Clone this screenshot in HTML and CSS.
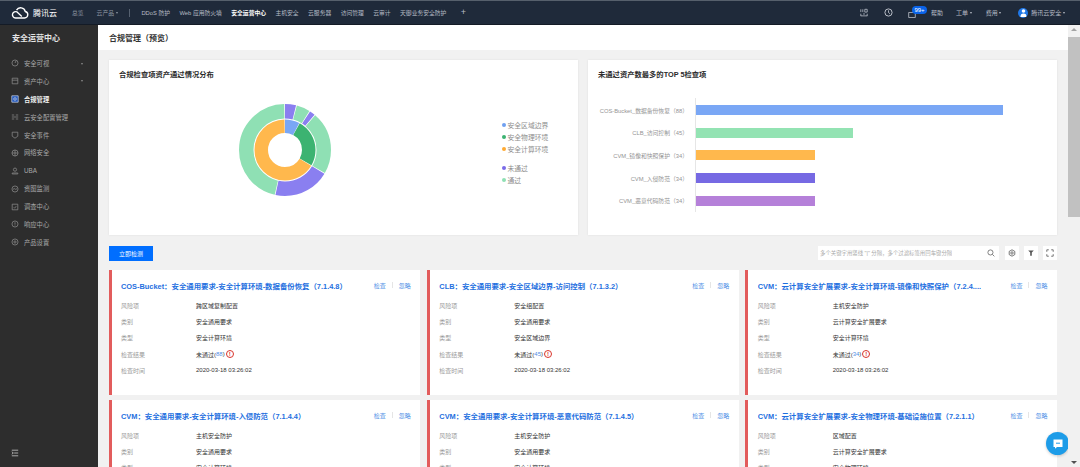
FILE: index.html
```html
<!DOCTYPE html>
<html lang="zh">
<head>
<meta charset="utf-8">
<title>合规管理（预览）</title>
<link rel="stylesheet" href="styles.css">
</head>
<body>
<header class="topbar">
  <div class="logo">
    <svg class="logo-mark" viewBox="0 0 22 14" width="20" height="13"><path d="M6 13h10a3.600 3.600 0 0 0 .8-7.100A5.200 5.200 0 0 0 7.200 4.400M6 13a3.500 3.500 0 1 1 1.800-6.600L13 11.400" fill="none" stroke="#fff" stroke-width="1.500"/></svg>
    <span class="logo-text">腾讯云</span>
  </div>
  <nav class="nav">
    <a class="nav-dim">总览</a>
    <a class="nav-dim nav-products">云产品 <i class="caret"></i></a>
    <span class="nav-sep"></span>
    <a>DDoS 防护</a><a>Web 应用防火墙</a><a class="nav-active">安全运营中心</a><a>主机安全</a><a>云服务器</a><a>访问管理</a><a>云审计</a><a>天御业务安全防护</a>
    <a class="nav-plus">+</a>
  </nav>
  <div class="top-right">
    <svg class="ti ti-a" viewBox="0 0 10 10" width="8" height="9"><path d="M1 1v3.500M3.500 1v3.500M6 1h3v3.500H6zM1 6.500v3M9 6.500v3M1 9.200h8M5 5.500v2.500" fill="none" stroke="#c9ced6" stroke-width=".9"/></svg>
    <svg class="ti ti-b" viewBox="0 0 10 10" width="9" height="9"><circle cx="5" cy="5" r="4" fill="none" stroke="#c9ced6" stroke-width="1"/><path d="M5 2.600V5l1.700 1.400" fill="none" stroke="#c9ced6" stroke-width=".9"/></svg>
    <span class="mail">
      <svg viewBox="0 0 10 8" width="8" height="6"><path d="M.6.6h8.800v6.800H.6z" fill="none" stroke="#c9ced6" stroke-width="1"/></svg>
      <b class="badge">99+</b>
    </span>
    <a class="tr-link tr-help">帮助</a>
    <a class="tr-link tr-order">工单 <i class="caret"></i></a>
    <a class="tr-link tr-fee">费用 <i class="caret"></i></a>
    <span class="avatar"><svg viewBox="0 0 10 10" width="9" height="9"><circle cx="5" cy="3.300" r="2" fill="#fff"/><path d="M1.600 10a3.400 3.800 0 0 1 6.800 0z" fill="#fff"/></svg></span>
    <a class="tr-link">腾讯云安全 <i class="caret"></i></a>
  </div>
</header>

<div class="shell">
  <aside class="sidebar">
    <h1 class="side-title">安全运营中心</h1>
    <ul class="menu">
      <li><svg class="mi" viewBox="0 0 10 10"><circle cx="5" cy="5" r="3.800"/><path d="M5 5l1.500-3"/></svg>安全可视<i class="caret side-caret"></i></li>
      <li><svg class="mi" viewBox="0 0 10 10"><path d="M1.500 1.500h7v7h-7zM1.500 4h7"/></svg>资产中心<i class="caret side-caret"></i></li>
      <li class="menu-active"><svg class="mi mi-active" viewBox="0 0 10 10"><path d="M1 1h8v8H1z" fill="#1b52b8"/><path d="M3.600 3.600h2.800v2.800H3.600z"/></svg>合规管理</li>
      <li><svg class="mi" viewBox="0 0 10 10"><path d="M1 2.500h3M6 2.500h3M1 5h8M1 7.500h3M6 7.500h3"/></svg>云安全配置管理</li>
      <li><svg class="mi" viewBox="0 0 10 10"><path d="M1.500 1.500h7v5L5 9 1.500 6.500z"/></svg>安全事件</li>
      <li><svg class="mi" viewBox="0 0 10 10"><circle cx="5" cy="5" r="3.800"/><path d="M1.200 5h7.600M5 1.200v7.600"/></svg>网络安全</li>
      <li><svg class="mi" viewBox="0 0 10 10"><circle cx="5" cy="3.300" r="2"/><path d="M1.500 8.700h7V7.500h-7z"/></svg>UBA</li>
      <li><svg class="mi" viewBox="0 0 10 10"><circle cx="5" cy="5" r="3.800"/><path d="M2.500 5.500l1.500-1 2 1 1.500-1"/></svg>资图监测</li>
      <li><svg class="mi" viewBox="0 0 10 10"><path d="M1.500 1.500h7v7h-7zM3.500 5.500l1 1 2-2.500"/></svg>调查中心</li>
      <li><svg class="mi" viewBox="0 0 10 10"><circle cx="5" cy="5" r="3.800"/><path d="M5 2.800v3M5 6.800v.6"/></svg>响应中心</li>
      <li><svg class="mi" viewBox="0 0 10 10"><circle cx="5" cy="5" r="3.800"/><circle cx="5" cy="5" r="1.400"/></svg>产品设置</li>
    </ul>
    <svg class="side-foot" viewBox="0 0 10 10" width="8" height="8"><path d="M1 1.500h8M4 5h5M1 8.500h8M1 3.500L3 5 1 6.500" fill="none" stroke="#c9c9c9" stroke-width="1"/></svg>
  </aside>

  <main class="content">
    <div class="page-head">合规管理（预览）</div>
    <div class="page-body">
      <section class="charts">
        <article class="panel">
          <h2 class="panel-title">合规检查项资产通过情况分布</h2>
          <div class="donut-wrap">
            <svg class="donut" viewBox="0 0 100 100" width="100" height="100">
              <g fill="none" transform="rotate(-90 50 50)">
                <circle cx="50" cy="50" r="38.750" stroke="#8a7ff0" stroke-width="14.500" pathLength="360" stroke-dasharray="14 346" stroke-dashoffset="0"/>
                <circle cx="50" cy="50" r="38.750" stroke="#8fe0b4" stroke-width="14.500" pathLength="360" stroke-dasharray="17 343" stroke-dashoffset="-15"/>
                <circle cx="50" cy="50" r="38.750" stroke="#8a7ff0" stroke-width="14.500" pathLength="360" stroke-dasharray="7 353" stroke-dashoffset="-33"/>
                <circle cx="50" cy="50" r="38.750" stroke="#8fe0b4" stroke-width="14.500" pathLength="360" stroke-dasharray="79 281" stroke-dashoffset="-41"/>
                <circle cx="50" cy="50" r="38.750" stroke="#8a7ff0" stroke-width="14.500" pathLength="360" stroke-dasharray="71 289" stroke-dashoffset="-121"/>
                <circle cx="50" cy="50" r="38.750" stroke="#8fe0b4" stroke-width="14.500" pathLength="360" stroke-dasharray="166 194" stroke-dashoffset="-193"/>
                <circle cx="50" cy="50" r="23.750" stroke="#7aa7f5" stroke-width="13.500" pathLength="360" stroke-dasharray="28 332" stroke-dashoffset="0"/>
                <circle cx="50" cy="50" r="23.750" stroke="#3cb371" stroke-width="13.500" pathLength="360" stroke-dasharray="91 269" stroke-dashoffset="-29"/>
                <circle cx="50" cy="50" r="23.750" stroke="#ffb84d" stroke-width="13.500" pathLength="360" stroke-dasharray="238 122" stroke-dashoffset="-121"/>
              </g>
            </svg>
            <ul class="legend">
              <li><i class="dot dot-blue"></i>安全区域边界</li>
              <li><i class="dot dot-green"></i>安全物理环境</li>
              <li class="legend-gap"><i class="dot dot-orange"></i>安全计算环境</li>
              <li><i class="dot dot-purple"></i>未通过</li>
              <li><i class="dot dot-mint"></i>通过</li>
            </ul>
          </div>
        </article>
        <article class="panel">
          <h2 class="panel-title">未通过资产数最多的TOP 5检查项</h2>
          <div class="bars">
            <div class="bar-row"><span class="bar-label">COS-Bucket_数据备份恢复（88）</span><i class="bar bar-1"></i></div>
            <div class="bar-row"><span class="bar-label">CLB_访问控制（45）</span><i class="bar bar-2"></i></div>
            <div class="bar-row"><span class="bar-label">CVM_镜像和快照保护（34）</span><i class="bar bar-3"></i></div>
            <div class="bar-row"><span class="bar-label">CVM_入侵防范（34）</span><i class="bar bar-4"></i></div>
            <div class="bar-row"><span class="bar-label">CVM_恶意代码防范（34）</span><i class="bar bar-5"></i></div>
          </div>
        </article>
      </section>

      <section class="toolbar">
        <button class="primary">立即检测</button>
        <div class="tools">
          <div class="search"><span class="search-ph">多个关键字用竖线 "|" 分隔，多个过滤标签用回车键分隔</span>
            <svg viewBox="0 0 10 10" width="8" height="8"><circle cx="4.300" cy="4.300" r="3.200" fill="none" stroke="#666" stroke-width="1"/><path d="M6.700 6.700L9.200 9.200" stroke="#666" stroke-width="1"/></svg>
          </div>
          <span class="tool"><svg viewBox="0 0 10 10" width="8" height="8"><circle cx="5" cy="5" r="1.500" fill="none" stroke="#555" stroke-width="1"/><path d="M5 1l3.500 2v4L5 9 1.500 7V3z" fill="none" stroke="#555" stroke-width="1"/></svg></span>
          <span class="tool"><svg viewBox="0 0 10 10" width="8" height="8"><path d="M1.500 2h7L6 4.500V8.500H4V4.500z" fill="#555"/></svg></span>
          <span class="tool"><svg viewBox="0 0 10 10" width="8" height="8"><path d="M1 3.500V1h2.500M6.500 1H9v2.500M9 6.500V9H6.500M3.500 9H1V6.500" fill="none" stroke="#555" stroke-width="1"/></svg></span>
        </div>
      </section>

      <section class="cards">
        <article class="card">
          <div class="card-head"><h3 class="card-title">COS-Bucket：安全通用要求-安全计算环境-数据备份恢复（7.1.4.8）</h3><span class="actions"><a>检查</a><i class="act-sep"></i><a>忽略</a></span></div>
          <dl class="fields">
            <dt>风险项</dt><dd>跨区域复制配置</dd>
            <dt>类别</dt><dd>安全通用要求</dd>
            <dt>类型</dt><dd>安全计算环境</dd>
            <dt>检查结果</dt><dd>未通过(<a>88</a>)<i class="warn">!</i></dd>
            <dt>检查时间</dt><dd>2020-03-18 03:26:02</dd>
          </dl>
        </article>
        <article class="card">
          <div class="card-head"><h3 class="card-title">CLB：安全通用要求-安全区域边界-访问控制（7.1.3.2）</h3><span class="actions"><a>检查</a><i class="act-sep"></i><a>忽略</a></span></div>
          <dl class="fields">
            <dt>风险项</dt><dd>安全组配置</dd>
            <dt>类别</dt><dd>安全通用要求</dd>
            <dt>类型</dt><dd>安全区域边界</dd>
            <dt>检查结果</dt><dd>未通过(<a>45</a>)<i class="warn">!</i></dd>
            <dt>检查时间</dt><dd>2020-03-18 03:26:02</dd>
          </dl>
        </article>
        <article class="card">
          <div class="card-head"><h3 class="card-title">CVM：云计算安全扩展要求-安全计算环境-镜像和快照保护（7.2.4....</h3><span class="actions"><a>检查</a><i class="act-sep"></i><a>忽略</a></span></div>
          <dl class="fields">
            <dt>风险项</dt><dd>主机安全防护</dd>
            <dt>类别</dt><dd>云计算安全扩展要求</dd>
            <dt>类型</dt><dd>安全计算环境</dd>
            <dt>检查结果</dt><dd>未通过(<a>34</a>)<i class="warn">!</i></dd>
            <dt>检查时间</dt><dd>2020-03-18 03:26:02</dd>
          </dl>
        </article>
        <article class="card">
          <div class="card-head"><h3 class="card-title">CVM：安全通用要求-安全计算环境-入侵防范（7.1.4.4）</h3><span class="actions"><a>检查</a><i class="act-sep"></i><a>忽略</a></span></div>
          <dl class="fields">
            <dt>风险项</dt><dd>主机安全防护</dd>
            <dt>类别</dt><dd>安全通用要求</dd>
            <dt>类型</dt><dd>安全计算环境</dd>
          </dl>
        </article>
        <article class="card">
          <div class="card-head"><h3 class="card-title">CVM：安全通用要求-安全计算环境-恶意代码防范（7.1.4.5）</h3><span class="actions"><a>检查</a><i class="act-sep"></i><a>忽略</a></span></div>
          <dl class="fields">
            <dt>风险项</dt><dd>主机安全防护</dd>
            <dt>类别</dt><dd>安全通用要求</dd>
            <dt>类型</dt><dd>安全计算环境</dd>
          </dl>
        </article>
        <article class="card">
          <div class="card-head"><h3 class="card-title">CVM：云计算安全扩展要求-安全物理环境-基础设施位置（7.2.1.1）</h3><span class="actions"><a>检查</a><i class="act-sep"></i><a>忽略</a></span></div>
          <dl class="fields">
            <dt>风险项</dt><dd>区域配置</dd>
            <dt>类别</dt><dd>云计算安全扩展要求</dd>
            <dt>类型</dt><dd>安全物理环境</dd>
          </dl>
        </article>
      </section>
    </div>
    <div class="chat"><svg viewBox="0 0 12 12" width="12" height="12"><path d="M1.500 1.500h9v7.500H5L3 10.800V9H1.500z" fill="#fff"/><path d="M4 5.200h4" stroke="#1d9ce8" stroke-width="1"/></svg></div>
  </main>

  <div class="scrollbar">
    <i class="sb-arrow sb-up"></i>
    <div class="sb-thumb"></div>
    <i class="sb-arrow sb-down"></i>
  </div>
</div>
</body>
</html>
```

FILE: styles.css
```css
* { box-sizing: border-box; }
html, body { margin: 0; height: 467px; overflow: hidden; }
body {
  display: flex;
  flex-direction: column;
  background: #f1f1f1;
  color: #222;
  font-family: "Liberation Sans", "Noto Sans CJK SC", sans-serif;
  font-size: 6px;
}
ul, dl, dd, h1, h2, h3 { margin: 0; padding: 0; list-style: none; }
i { font-style: normal; }

.caret {
  display: inline-block;
  width: 0;
  height: 0;
  border: 1.500px solid transparent;
  border-top: 2px solid currentColor;
  border-bottom: 0;
  vertical-align: middle;
}

/* top bar */
.topbar {
  flex: none;
  height: 25px;
  display: flex;
  align-items: center;
  background: #1f2a3a;
  border-top: 1px solid #56606c;
  border-bottom: 1px solid #141b26;
  color: #b6bcc5;
}
.logo { width: 72px; display: flex; align-items: center; gap: 3px; padding-left: 10px; color: #fff; }
.logo-text { font-size: 8px; }
.nav { display: flex; align-items: center; gap: 9.400px; font-size: 5.800px; }
.nav a { white-space: nowrap; }
.nav-dim { color: #8f98a4; }
.nav-products { margin-left: 3.600px; }
.nav-sep { width: 1px; height: 8px; background: #566170; margin: 0 2px; }
.nav-active { color: #fff; font-weight: 700; }
.nav-plus { font-size: 9px; margin-left: 5px; line-height: 1; }
.top-right { margin-left: auto; display: flex; align-items: center; padding-right: 15px; }
.ti-b { margin-left: 16px; }
.mail { position: relative; display: flex; margin-left: 15px; margin-top: 4px; }
.badge {
  position: absolute;
  left: 4px;
  top: -6px;
  width: 15px;
  background: #0a63e8;
  border-radius: 4px;
  color: #fff;
  font-size: 6px;
  font-weight: 400;
  line-height: 8px;
  text-align: center;
}
.tr-link { white-space: nowrap; }
.tr-help { margin-left: 15px; }
.tr-order { margin-left: 13px; }
.tr-fee { margin-left: 14px; }
.avatar {
  margin-left: 17px;
  margin-right: 3px;
  width: 10px;
  height: 10px;
  border-radius: 50%;
  background: #1f78e8;
  display: flex;
  align-items: center;
  justify-content: center;
  overflow: hidden;
}

/* shell */
.shell { flex: 1; min-height: 0; display: flex; }

/* sidebar */
.sidebar {
  flex: none;
  width: 98px;
  background: #2d2d2d;
  color: #a8a8a8;
  display: flex;
  flex-direction: column;
  font-size: 6.300px;
}
.side-title {
  height: 25px;
  margin-bottom: 4.500px;
  padding-left: 12px;
  display: flex;
  align-items: center;
  font-size: 8px;
  font-weight: 700;
  color: #e4e4e4;
}
.menu li { position: relative; height: 17.900px; display: flex; align-items: center; padding-left: 11px; white-space: nowrap; }
.mi { width: 8px; height: 8px; margin-right: 5px; fill: none; stroke: #8f8f8f; stroke-width: .9; flex: none; }
.mi-active { stroke: #cfd8ea; }
.menu-active { color: #f0f0f0; font-weight: 700; }
.side-caret { position: absolute; left: 81px; top: 8px; color: #8a8a8a; }
.side-foot { margin: auto 0 10px 11px; }

/* main */
.content { position: relative; flex: 1; min-width: 0; overflow: hidden; display: flex; flex-direction: column; }
.page-head {
  flex: none;
  height: 25px;
  padding-left: 11px;
  display: flex;
  align-items: center;
  background: #fff;
  font-size: 8px;
  font-weight: 700;
  color: #333;
}
.page-body { padding: 10px 11px 0; }

.charts { display: grid; grid-template-columns: 1fr 1fr; gap: 10px; }
.panel { height: 175px; background: #fff; box-shadow: 0 0 2px rgba(0,0,0,.08); padding: 10px 10px 0; }
.panel-title { font-size: 7.300px; font-weight: 700; color: #2b2b2b; line-height: 10px; }

.donut-wrap { display: flex; margin-top: 20px; padding-left: 116px; }
.donut { flex: none; }
.legend {
  margin-left: 166.500px;
  margin-top: 18.500px;
  font-size: 6.800px;
  color: #8d8d8d;
  white-space: nowrap;
}
.legend li { display: flex; align-items: center; height: 12.300px; gap: 2px; }
.legend-gap { margin-bottom: 6.500px; }
.dot { width: 4px; height: 4px; border-radius: 50%; flex: none; }
.dot-blue { background: #6fa0f0; }
.dot-green { background: #3cb371; }
.dot-orange { background: #ffaa33; }
.dot-purple { background: #7a6be8; }
.dot-mint { background: #8fe0b4; }

.bars {
  margin-top: 18px;
  margin-left: 97px;
  width: 320px;
  height: 114px;
  border-left: 1px solid #e6e6e6;
  padding-top: 7px;
  display: flex;
  flex-direction: column;
  gap: 12.700px;
}
.bar-row { position: relative; height: 10px; display: flex; align-items: center; }
.bar-label {
  position: absolute;
  right: 100%;
  margin-right: 8px;
  white-space: nowrap;
  color: #949494;
  font-size: 5.800px;
}
.bar { display: block; height: 10px; }
.bar-1 { width: 307px; background: #7aa7f5; }
.bar-2 { width: 157px; background: #93e3b3; }
.bar-3 { width: 119px; background: #ffb84d; }
.bar-4 { width: 119px; background: #7669e3; }
.bar-5 { width: 119px; background: #b580d9; }

.toolbar { display: flex; align-items: center; justify-content: space-between; margin-top: 10px; height: 16px; }
.primary {
  width: 44px;
  height: 15px;
  border: 0;
  padding: 0;
  background: #006eff;
  color: #fff;
  font: inherit;
  font-size: 6px;
}
.tools { display: flex; align-items: center; gap: 5px; }
.search {
  width: 181px;
  height: 14px;
  margin-right: 1px;
  background: #fff;
  display: flex;
  align-items: center;
  justify-content: space-between;
  padding: 0 4px 0 2px;
  color: #aaa;
  font-size: 5.400px;
}
.search-ph { white-space: nowrap; overflow: hidden; }
.tool { width: 14px; height: 14px; background: #fff; display: flex; align-items: center; justify-content: center; }

.cards {
  display: grid;
  grid-template-columns: repeat(3, 1fr);
  column-gap: 6.500px;
  row-gap: 5px;
  margin: 9px 0 0 -.5px;
}
.card {
  height: 125px;
  background: #fff;
  border-left: 3px solid #e25c5c;
  padding: 10px 9.500px 0 9.500px;
  overflow: hidden;
}
.card-head { display: flex; align-items: center; justify-content: space-between; height: 10px; }
.card-title {
  font-size: 7.400px;
  font-weight: 700;
  color: #1e6fe0;
  white-space: nowrap;
  overflow: hidden;
  min-width: 0;
}
.actions { flex: none; display: flex; align-items: center; color: #4f8fe6; font-size: 6px; gap: 6px; }
.act-sep { width: 1px; height: 6px; background: #e5e5e5; }
.fields {
  display: grid;
  grid-template-columns: 75px 1fr;
  grid-auto-rows: 16.300px;
  align-items: center;
  margin-top: 7px;
  font-size: 6px;
}
.fields dt { color: #9a9a9a; }
.fields dd { color: #333; display: flex; align-items: center; }
.fields a { color: #4f8fe6; }
.warn {
  display: flex;
  align-items: center;
  justify-content: center;
  width: 8px;
  height: 8px;
  margin-left: 1px;
  border: 1px solid #d9342b;
  border-radius: 50%;
  color: #d9342b;
  font-size: 6px;
  font-weight: 700;
  line-height: 1;
}
.chat {
  position: absolute;
  left: 948px;
  bottom: 12px;
  width: 23px;
  height: 23px;
  border-radius: 50%;
  background: #1d9ce8;
  display: flex;
  align-items: center;
  justify-content: center;
  box-shadow: 0 1px 3px rgba(0,0,0,.2);
}

.scrollbar {
  flex: none;
  width: 12px;
  background: #f1f1f1;
  display: flex;
  flex-direction: column;
  align-items: center;
}
.sb-thumb { width: 12px; height: 180px; background: #c1c1c1; margin: 3px 0 auto; }
.sb-arrow { width: 0; height: 0; border: 3px solid transparent; margin: 3px 0; }
.sb-up { border-bottom: 3px solid #a3a3a3; border-top: 0; }
.sb-down { border-top: 3px solid #505050; border-bottom: 0; }
```
